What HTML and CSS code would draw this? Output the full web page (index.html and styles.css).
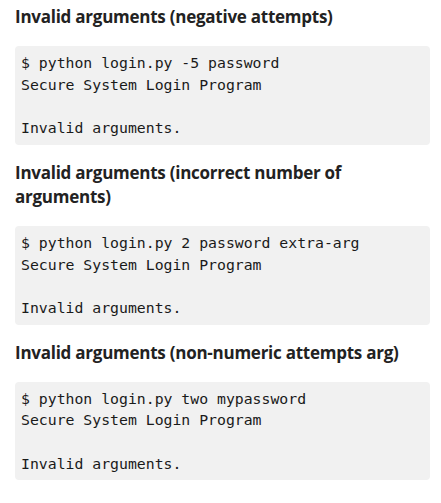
FILE: index.html
```html
<!DOCTYPE html>
<html>
<head>
<meta charset="utf-8">
<link rel="stylesheet" href="styles.css">
</head>
<body>
<div class="page">
  <h3 class="title">Invalid arguments (negative attempts)</h3>
  <pre class="code">$ python login.py -5 password
Secure System Login Program

Invalid arguments.</pre>
  <h3 class="title">Invalid arguments (incorrect number of arguments)</h3>
  <pre class="code">$ python login.py 2 password extra-arg
Secure System Login Program

Invalid arguments.</pre>
  <h3 class="title">Invalid arguments (non-numeric attempts arg)</h3>
  <pre class="code">$ python login.py two mypassword
Secure System Login Program

Invalid arguments.</pre>
</div>
</body>
</html>
```
FILE: styles.css
```css
html, body {
  margin: 0;
  padding: 0;
  background: #ffffff;
}
.page {
  padding: 5px 11px 0 15px;
  display: flex;
  flex-direction: column;
}
.title {
  margin: 0 0 17px 0;
  font-family: "Open Sans", sans-serif;
  font-weight: 700;
  font-size: 17px;
  letter-spacing: -0.25px;
  line-height: 24px;
  color: #222222;
}
.code {
  margin: 0 0 16px 0;
  padding: 6px 6px;
  background: #f1f1f1;
  border-radius: 4px;
  font-family: "DejaVu Sans Mono", monospace;
  font-size: 14.8px;
  line-height: 21.7px;
  color: #1a1a1a;
  white-space: pre;
}
```
